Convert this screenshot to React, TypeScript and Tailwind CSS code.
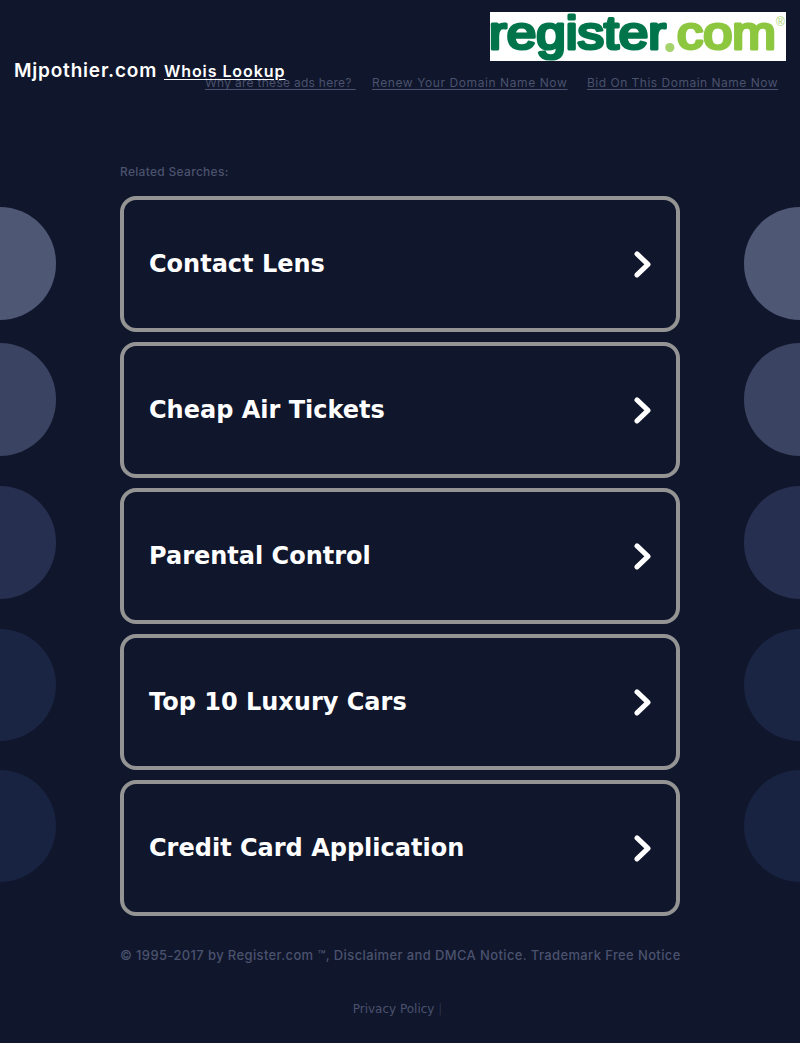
const SEARCHES = [
  'Contact Lens',
  'Cheap Air Tickets',
  'Parental Control',
  'Top 10 Luxury Cars',
  'Credit Card Application',
]

// half circles fading out towards the bottom of the page
const DOTS = [
  'h-[113px] bg-[#4e5773]',
  'h-[113px] mt-[23px] bg-[#3b4362]',
  'h-[113px] mt-[30px] bg-[#262f4f]',
  'h-[112px] mt-[30px] bg-[#1a2443]',
  'h-[112px] mt-[29px] bg-[#182241]',
]

function Logo() {
  return (
    <svg width="296" height="49" viewBox="0 0 296 49" className="block bg-white overflow-visible" role="img">
      <g
        fontFamily="'Liberation Sans', sans-serif"
        fontSize="46"
        fontWeight="400"
        strokeWidth="3.2"
        strokeLinejoin="round"
      >
        <text x="-1" y="37" textLength="177" lengthAdjust="spacingAndGlyphs" fill="#00744b" stroke="#00744b">
          register
        </text>
        <text x="187" y="37" textLength="99" lengthAdjust="spacingAndGlyphs" fill="#8dc73f" stroke="#8dc73f">
          com
        </text>
      </g>
      <circle cx="179.800" cy="35.500" r="4.600" fill="#a5d36b" />
      <text x="286" y="14" fontFamily="'Liberation Sans', sans-serif" fontSize="12" fill="#a9d570">®</text>
    </svg>
  )
}

function Chevron() {
  return (
    <svg width="18" height="28" viewBox="0 0 18 28" className="block" fill="none">
      <path d="M3 3.900 14 14.400 3 24.900" stroke="#fff" strokeWidth="5" strokeLinecap="round" strokeLinejoin="round" />
    </svg>
  )
}

function Dots({ side }: { side: 'left' | 'right' }) {
  return (
    <div className="w-14 pt-[47px]">
      {DOTS.map(d => (
        <div key={d} className={`${d} ${side === 'left' ? 'rounded-r-full' : 'rounded-l-full'}`} />
      ))}
    </div>
  )
}

export default function App() {
  return (
    <div className="w-[800px] h-[1043px] overflow-hidden bg-[#10162b] font-['Inter',sans-serif] text-[#4a526e]">
      <header className="grid h-40 px-3.5 pt-3">
        <div className="col-start-1 row-start-1 flex flex-col items-end">
          <Logo />
          <div className="flex mt-[13px] mr-2 text-xs leading-[18px] whitespace-pre underline underline-offset-2">
            <a href="#" className="w-[151px] mr-4 tracking-[0.280px]">{'Why are these ads here? '}</a>
            <a href="#" className="w-[196px] mr-[19px] tracking-[0.590px]">Renew Your Domain Name Now</a>
            <a href="#" className="w-[191px] tracking-[0.500px]">Bid On This Domain Name Now</a>
          </div>
        </div>
        <div className="col-start-1 row-start-1 justify-self-start flex items-baseline pt-[47px] text-white">
          <h1 className="w-[150px] text-[19px] leading-6 font-semibold tracking-[0.800px] whitespace-nowrap">
            Mjpothier.com
          </h1>
          <a href="#" className="text-base leading-6 font-semibold tracking-[0.920px] underline underline-offset-2">
            Whois Lookup
          </a>
        </div>
      </header>

      <main className="flex justify-between">
        <Dots side="left" />
        <div className="w-[560px]">
          <p className="h-9 pt-[3px] text-xs leading-[18px] font-medium tracking-[0.300px]">Related Searches:</p>
          <ul className="flex flex-col gap-2.5 font-['DejaVu_Sans',sans-serif]">
            {SEARCHES.map(s => (
              <li key={s}>
                <a
                  href="#"
                  className="flex items-center justify-between h-[136px] pl-[25px] pr-6 border-4 border-[#949494] rounded-2xl text-2xl font-bold text-white"
                >
                  {s}
                  <Chevron />
                </a>
              </li>
            ))}
          </ul>
        </div>
        <Dots side="right" />
      </main>

      <footer className="flex flex-col items-center pt-[29px]">
        <p className="w-[560px] h-5 text-[13px] leading-5 font-medium tracking-[0.375px] whitespace-nowrap">
          © 1995-2017 by Register.com ™, Disclaimer and DMCA Notice. Trademark Free Notice
        </p>
        <p className="mt-[34px] pr-[5px] text-xs leading-5 font-['DejaVu_Sans',sans-serif]">
          Privacy Policy <span className="text-[#29314b]">|</span>
        </p>
      </footer>
    </div>
  )
}
